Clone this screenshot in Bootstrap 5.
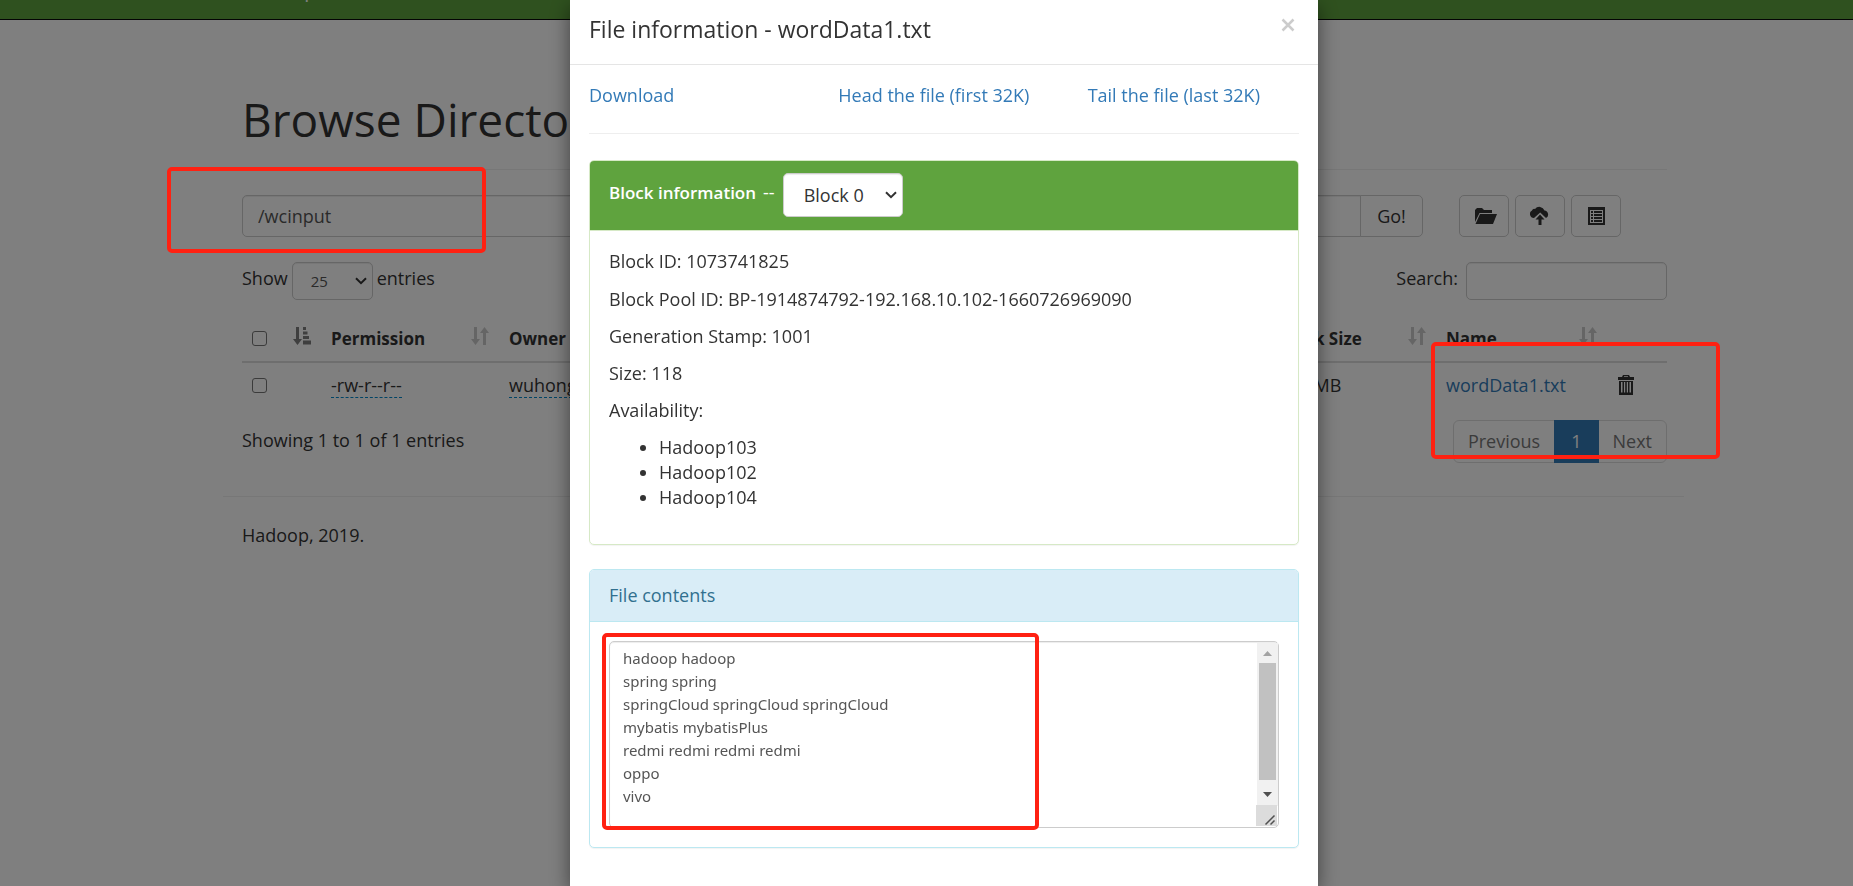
<!DOCTYPE html>
<html lang="en">
<head>
<meta charset="utf-8">
<meta name="viewport" content="width=device-width, initial-scale=1">
<title>Browsing HDFS</title>
<link href="https://cdn.jsdelivr.net/npm/bootstrap@5.3.0/dist/css/bootstrap.min.css" rel="stylesheet">
<style>
  body { font-family: "Open Sans", "Noto Sans", sans-serif; font-size: 18px; line-height: 25px; color: #333; background: #fff; min-height: 100vh; overflow: hidden; }
  a { color: #337ab7; text-decoration: none; }
  hr { margin: 0; border-color: #eee; opacity: 1; }
  label, .form-control, .form-select, .btn, .page-link { color: inherit; font-size: 18px; line-height: 25px; }

  .top-bar { height: 20px; padding: 0; background: #5fa33e; border-bottom: 1px solid #080808; overflow: hidden; }
  .top-bar .navbar-brand { padding: 0; font-size: 20px; line-height: 28px; color: #fff; margin-top: -24px; }
  .page-shift { padding-left: 54px; }
  .page-box { max-width: 1461px; padding: 0 17px 0 19px; margin: 0 auto; position: relative; }
  .page-title { font-size: 46px; line-height: 50px; font-weight: 400; margin: 0; padding: 74px 0 25px; }

  .path-row { padding-top: 25px; }
  .path-row .input-group { max-width: 1181px; }
  .form-control, .form-select { border-color: #ccc; box-shadow: inset 0 1px 1px rgba(0,0,0,.075); border-radius: 5px; }
  .path-row .form-control { height: 42px; padding: 6px 15px; color: #555; }
  .line-btn { height: 42px; border: 1px solid #ccc; background: #fff; border-radius: 5px; padding: 6px 14px; }
  .go-btn { width: 63px; border-radius: 0 5px 5px 0; }
  .icon-set { gap: 6px; margin-right: 46px; }
  .icon-btn { width: 50px; }
  .icon-btn svg, .trash svg { display: block; }
  .form-select { --bs-form-select-bg-img: url("data:image/svg+xml,%3Csvg xmlns='http://www.w3.org/2000/svg' viewBox='0 0 12 8'%3E%3Cpath fill='none' stroke='%23333' stroke-width='2' d='M1 1.2l5 5 5-5'/%3E%3C/svg%3E"); background-size: 12px 8px; background-position: right 5px center; }
  .len-select { width: 81px; height: 38px; font-size: 15px; line-height: 22px; padding: 7px 18px; color: #555; }
  .find-box { width: 201px; height: 38px; }
  .tool-row { padding-top: 25px; }
  .tool-row label { height: 32px; }

  .dir-table { table-layout: fixed; width: 100%; margin-top: 14px; }
  .dir-table th, .dir-table td { padding: 10px; white-space: nowrap; }
  .dir-table th { border-bottom: 2px solid #ddd; padding: 11px 10px 9px; font-size: 17px; font-weight: 700; height: 48px; }
  .dir-table td { height: 46px; }
  .w-check { width: 79px; } .w-perm { width: 178px; } .w-owner { width: 120px; } .w-size { width: 110px; }
  .w-block { width: 168px; } .w-name { width: 171px; } .w-act { width: 60px; }
  .sorter { opacity: .2; margin-top: -6px; }
  .sorter.on { opacity: .5; }
  .tick { width: 15px; height: 15px; margin: 0; border: 1px solid #767676; border-radius: 3px; appearance: none; background: #fff; display: block; }
  .edit { color: #333; border-bottom: 1px dashed #08c; display: inline-block; line-height: 24px; }

  .info-row { padding-top: 8px; }
  .pagination .page-link { height: 43px; padding: 8px 14px; color: #777; border-color: #ddd; }
  .pagination .active .page-link { color: #fff; background: #337ab7; border-color: #337ab7; padding: 8px 16px; }
  .foot-text { padding: 26px 0 0 0; }
  .foot-line { margin: 33px -17px 0 -19px; }

  .modal-backdrop { --bs-backdrop-opacity: .5; }
  .modal { padding-left: 35px; overflow: hidden; }
  .modal-dialog { max-width: 748px; margin: 0 auto; }
  .modal-content { border: 0; border-radius: 0; box-shadow: 0 6px 19px rgba(0,0,0,.5); min-height: 100vh; color: #333; }
  .modal-header { height: 65px; padding: 0 19px; border-color: #e5e5e5; border-radius: 0; align-items: flex-start; }
  .modal-title { font-size: 23px; line-height: 32px; font-weight: 400; padding-top: 13px; }
  .x-btn { border: 0; background: none; padding: 0; margin: 18px 4px 0 0; color: #ccc; line-height: 0; }
  .modal-body { padding: 18px 19px 38px; }
  .file-links { --bs-gutter-x: 38px; padding-bottom: 25px; }
  .panel-box { border-radius: 5px; margin-top: 26px; box-shadow: 0 1px 1px rgba(0,0,0,.05); }
  .panel-box .card-header { padding: 12px 19px; border-radius: 4px 4px 0 0; }
  .panel-box .card-body { padding: 19px; }
  .panel-green { border-color: #d6e9c6; }
  .panel-green .card-header { background: #5fa33e; color: #fff; border-color: #d6e9c6; height: 70px; }
  .panel-green .card-body { height: 313px; padding-top: 18px; }
  .panel-blue { border-color: #bce8f1; margin-top: 24px; }
  .panel-blue .card-header { background: #d9edf7; color: #31708f; border-color: #bce8f1; padding: 13px 19px; }
  .block-select { width: 120px; height: 44px; padding: 8px 20px; color: #333; }
  .head-label { font-weight: 600; font-size: 17px; }
  .block-label { gap: 7px; padding-top: 7px; }
  .facts p { margin: 0 0 12px; }
  .facts p:first-of-type { margin-bottom: 13px; }
  .facts ul { padding-left: 50px; }
  .view-box { border: 1px solid #ccc; border-radius: 5px; box-shadow: inset 0 1px 1px rgba(0,0,0,.075); }
  .view-box textarea { border: 0; outline: 0; background: none; resize: none; overflow: hidden; height: 185px; padding: 5px 13px; font-family: "Noto Sans", "Open Sans", sans-serif; font-size: 15px; line-height: 23px; color: #555; }

  .marks { position: fixed; inset: 0; z-index: 1080; pointer-events: none; }
  .mark-frame { position: absolute; border: 4px solid #ff2112; border-radius: 5px; }
  .mark-path { left: -56px; top: 167px; width: 319px; height: 86px; }
  .mark-file { right: -36px; top: 342px; width: 289px; height: 117px; }
  .mark-text { left: -8px; top: -9px; width: 437px; height: 197px; }
</style>
</head>
<body>
<svg class="d-none" aria-hidden="true">
  <symbol id="sort-both" viewBox="0 0 18 18"><path d="M3 0h3v12h3l-4.500 6L0 12h3zM12 18V6H9l4.500-6L18 6h-3v12z"/></symbol>
  <symbol id="sort-asc" viewBox="0 0 18 18"><path d="M3 0h3v12h3l-4.500 6L0 12h3zM10 0h3v3h-3zM10 4.500h4.500v3H10zM10 9h6v3h-6zM10 13.500h8v4h-8z"/></symbol>
</svg>

<nav class="navbar top-bar page-shift align-items-start">
  <div class="page-box w-100"><a class="navbar-brand d-block" href="#">Hadoop</a></div>
</nav>

<main class="page-shift">
  <div class="page-box">
    <h1 class="page-title">Browse Directory</h1>
    <hr>
    <div class="path-row d-flex">
      <div class="input-group flex-nowrap">
        <input class="form-control" type="text" value="/wcinput" aria-label="Directory">
        <button class="btn line-btn go-btn" type="button">Go!</button>
      </div>
      <div class="icon-set d-flex ms-auto">
        <button class="btn line-btn icon-btn" type="button" aria-label="Create directory">
          <svg width="23" height="18" viewBox="0 0 23 18" fill="#333"><path d="M1 15V3l2-2h5l2 2h8v3H5.500z"/><path d="M6 7h17l-4 10H1.500z"/></svg>
        </button>
        <button class="btn line-btn icon-btn" type="button" aria-label="Upload files">
          <svg width="20" height="20" viewBox="0 0 20 20" fill="#333"><path d="M4 12a4 4 0 0 1-2-7.500A2.500 2.500 0 0 1 5 3a5.500 5.500 0 0 1 9.500 1.500A4 4 0 0 1 16 12l-5.800-5.600z"/><path d="M10 8.500l4.500 5H11.500V19h-3v-5.500h-3z"/></svg>
        </button>
        <button class="btn line-btn icon-btn" type="button" aria-label="Cut and paste">
          <svg width="20" height="20" viewBox="0 0 20 20" fill="#333"><path fill-rule="evenodd" d="M2 1h17v18H2zM4 4v13h13V4z"/><path d="M5 5h2v2H5zM5 8h2v2H5zM5 11h2v2H5zM5 14h2v2H5zM8 5h8v2H8zM8 8h8v2H8zM8 11h8v2H8zM8 14h8v2H8z"/></svg>
        </button>
      </div>
    </div>

    <div class="tool-row d-flex justify-content-between">
      <div class="d-flex gap-1">
        <label for="len" class="d-flex align-items-center">Show</label>
        <select id="len" class="form-select len-select"><option>25</option><option>50</option></select>
        <label for="len" class="d-flex align-items-center">entries</label>
      </div>
      <div class="d-flex gap-2">
        <label for="find" class="d-flex align-items-center">Search:</label>
        <input id="find" class="form-control find-box" type="search">
      </div>
    </div>

    <table class="dir-table">
      <colgroup><col class="w-check"><col class="w-perm"><col class="w-owner"><col><col class="w-size"><col><col><col class="w-block"><col class="w-name"><col class="w-act"></colgroup>
      <thead>
        <tr>
          <th><div class="d-flex justify-content-between align-items-center"><input class="tick" type="checkbox" aria-label="Select all"><svg class="sorter on" width="18" height="18"><use href="#sort-asc"/></svg></div></th>
          <th><div class="d-flex justify-content-between align-items-center">Permission<svg class="sorter" width="18" height="18"><use href="#sort-both"/></svg></div></th>
          <th>Owner</th><th>Group</th><th>Size</th><th>Last Modified</th><th>Replication</th>
          <th><div class="d-flex justify-content-between align-items-center">Block Size<svg class="sorter" width="18" height="18"><use href="#sort-both"/></svg></div></th>
          <th><div class="d-flex justify-content-between align-items-center">Name<svg class="sorter" width="18" height="18"><use href="#sort-both"/></svg></div></th>
          <th></th>
        </tr>
      </thead>
      <tbody>
        <tr>
          <td><input class="tick" type="checkbox" aria-label="Select wordData1.txt"></td>
          <td><a class="edit" href="#">-rw-r--r--</a></td>
          <td><a class="edit" href="#">wuhong</a></td>
          <td>supergroup</td><td>118 B</td><td>Aug 17 17:05</td><td>3</td><td>128 MB</td>
          <td><a href="#">wordData1.txt</a></td>
          <td><a class="trash" href="#" aria-label="Delete"><svg width="18" height="21" viewBox="0 0 18 21" fill="#333"><path fill-rule="evenodd" d="M6 0h6l1 2h4v3H1V2h4zM7 1.300V2h4v-.700z"/><path fill-rule="evenodd" d="M2 6h14v14H2zM4 7v10.500h1.500V7zM7 7v10.500h1.200V7zM9.800 7v10.500H11V7zM12.500 7v10.500H14V7z"/></svg></a></td>
        </tr>
      </tbody>
    </table>

    <div class="info-row d-flex justify-content-between">
      <div class="pt-2 mt-1">Showing 1 to 1 of 1 entries</div>
      <ul class="pagination mb-0 pt-1">
        <li class="page-item"><a class="page-link" href="#">Previous</a></li>
        <li class="page-item active"><a class="page-link" href="#">1</a></li>
        <li class="page-item"><a class="page-link" href="#">Next</a></li>
      </ul>
    </div>
    <hr class="foot-line">
    <footer class="foot-text">Hadoop, 2019.</footer>
  </div>
</main>

<div class="modal-backdrop show"></div>
<div class="modal d-block" tabindex="-1" role="dialog" aria-labelledby="file-title">
  <div class="modal-dialog">
    <div class="modal-content">
      <div class="modal-header">
        <h4 class="modal-title" id="file-title">File information - wordData1.txt</h4>
        <button class="x-btn" type="button" aria-label="Close"><svg width="14" height="14" viewBox="0 0 14 14" stroke="#ccc" stroke-width="2.500"><path d="M1.500 1.500l11 11M12.500 1.500l-11 11"/></svg></button>
      </div>
      <div class="modal-body">
        <div class="file-links row">
          <div class="col-4"><a href="#">Download</a></div>
          <div class="col-4"><a href="#">Head the file (first 32K)</a></div>
          <div class="col-4"><a href="#">Tail the file (last 32K)</a></div>
        </div>
        <hr>
        <section class="card panel-box panel-green">
          <div class="card-header d-flex gap-2">
            <label for="blk" class="block-label d-flex"><span class="head-label">Block information</span> --</label>
            <select id="blk" class="form-select block-select"><option>Block 0</option></select>
          </div>
          <div class="card-body facts">
            <p>Block ID: 1073741825</p>
            <p>Block Pool ID: BP-1914874792-192.168.10.102-1660726969090</p>
            <p>Generation Stamp: 1001</p>
            <p>Size: 118</p>
            <p>Availability:</p>
            <ul class="mb-0"><li>Hadoop103</li><li>Hadoop102</li><li>Hadoop104</li></ul>
          </div>
        </section>
        <section class="card panel-box panel-blue">
          <div class="card-header">File contents</div>
          <div class="card-body">
            <div class="view-box d-flex position-relative">
              <textarea class="flex-grow-1" aria-label="File contents" readonly>hadoop hadoop
spring spring
springCloud springCloud springCloud
mybatis mybatisPlus
redmi redmi redmi redmi
oppo
vivo
</textarea>
              <svg width="22" height="185" viewBox="0 0 22 185" aria-hidden="true"><path fill="#f1f1f1" d="M1 1h21v163H1z"/><path fill="#a3a3a3" d="M7 14l4.500-5 4.500 5z"/><path fill="#c1c1c1" d="M3 21h17v117H3z"/><path fill="#505050" d="M7 150h9l-4.500 5z"/><path fill="#dcdcdc" d="M0 163h21v21H0z"/><path stroke="#505050" stroke-width="1.500" d="M9.500 182.500l9-9M14.500 182.500l4-4"/></svg>
              <div class="mark-frame mark-text"></div>
            </div>
          </div>
        </section>
      </div>
    </div>
  </div>
</div>

<div class="marks page-shift" aria-hidden="true">
  <div class="page-box">
    <div class="mark-frame mark-path"></div>
    <div class="mark-frame mark-file"></div>
  </div>
</div>
<script src="https://cdn.jsdelivr.net/npm/bootstrap@5.3.0/dist/js/bootstrap.bundle.min.js"></script>
</body>
</html>
